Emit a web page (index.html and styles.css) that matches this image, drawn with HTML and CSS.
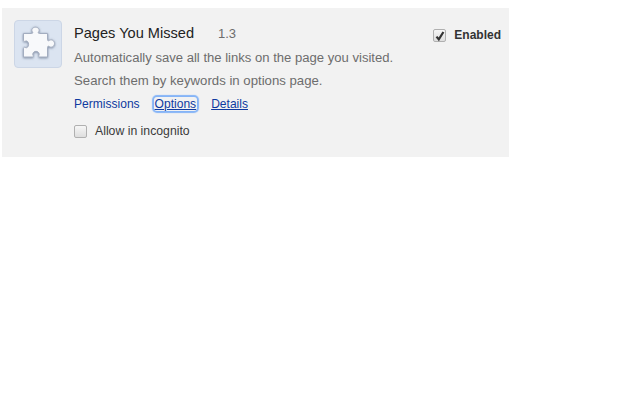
FILE: index.html
```html
<!DOCTYPE html>
<html lang="en">
<head>
<meta charset="utf-8">
<title>Extensions</title>
<link rel="stylesheet" href="styles.css">
</head>
<body>
<div class="card">
  <div class="icon">
    <svg width="48" height="48" viewBox="0 0 48 48">
      <defs>
        <filter id="s" x="-20%" y="-20%" width="140%" height="140%"><feDropShadow dx="0" dy="0.6" stdDeviation="0.8" flood-color="#5d6b85" flood-opacity="0.8"/></filter>
      </defs>
      <path class="piece" filter="url(#s)" d="M9.5 13.5 H17.5 C19 13.5 19 12.5 18.2 11.5 C17 9.5 18.8 7.2 21.5 7.2 C24.2 7.2 26 9.5 24.8 11.5 C24 12.5 24 13.5 25.5 13.5 H33.5 V19.5 C33.5 21 34.5 21 35.5 20.3 C37.5 19 40.5 20.6 40.5 23.5 C40.5 26.4 37.5 28 35.5 26.7 C34.5 26 33.5 26 33.5 27.5 V37 H25.5 C24.5 37 24.5 36 25 35.2 C25.8 33.4 24.2 31.3 22 31.3 C19.8 31.3 18.2 33.4 19 35.2 C19.5 36 19.5 37 18.5 37 H9.5 V28.5 C9.5 27.3 10.5 27 11.3 27.5 C13.1 28.4 14.6 26.6 14.6 24.3 C14.6 22 13.1 20.3 11.3 21.2 C10.5 21.7 9.5 21.4 9.5 20.2 Z"/>
    </svg>
  </div>
  <div class="main">
    <div class="title"><span class="name">Pages You Missed</span><span class="version">1.3</span></div>
    <p class="desc">Automatically save all the links on the page you visited.</p>
    <p class="desc desc-wide">Search them by keywords in options page.</p>
    <div class="links"><a href="#p">Permissions</a><a href="#o" class="focused">Options</a><a href="#d" class="under">Details</a></div>
    <div class="incognito"><span class="box"></span><span>Allow in incognito</span></div>
  </div>
  <div class="enable">
    <span class="box">
      <svg width="14" height="14" viewBox="0 0 14 14"><path class="tick" d="M3.5 7.6 L5.8 10.4 L10.4 3"/></svg>
    </span>
    <span class="enabled-label">Enabled</span>
  </div>
</div>
</body>
</html>
```
FILE: styles.css
```css
html, body { margin: 0; padding: 0; background: #fff; }
body { padding: 8px 0 0 2px; font-family: "Liberation Sans", Arial, sans-serif; font-size: 13px; color: #6d6d6d; }
.card { width: 507px; height: 149px; box-sizing: border-box; background: #f2f2f2; display: flex; padding: 12px 8px 0 12px; }
.icon { width: 48px; height: 48px; flex: none; background: #dbe4f1; border: 1px solid #ccd6e6; border-radius: 4px; box-sizing: border-box; margin-right: 12px; display: flex; align-items: center; justify-content: center; }
.icon svg { flex: none; }
.piece { fill: #f8f9fb; stroke: #a3adc0; stroke-width: 1; }
.main { flex: 1; min-width: 0; }
.title { height: 26px; display: flex; align-items: baseline; }
.name { font-size: 14.6px; color: #222; width: 144px; line-height: 26px; }
.version { font-size: 13px; color: #6d6d6d; }
.desc { margin: 0; height: 23px; line-height: 23px; font-size: 13.08px; }
.desc-wide { font-size: 13.2px; }
.links { display: flex; align-items: center; height: 24px; font-size: 12.05px; }
.links a { color: #0f3aa0; text-decoration: none; margin-right: 14px; }
.links a.focused { text-decoration: underline; padding: 0 1px; border-radius: 3px; box-shadow: 0 0 1px 2px #85b4f7; }
.links a.under { text-decoration: underline; }
.incognito { display: flex; align-items: center; gap: 8px; margin-top: 8px; font-size: 12.25px; color: #3a3a3a; }
.box { width: 13px; height: 13px; box-sizing: border-box; flex: none; border: 1px solid #b0b0b0; border-radius: 2px; background: linear-gradient(#f6f6f6, #dedede); position: relative; display: block; }
.box svg { position: absolute; left: -1px; top: -1px; }
.tick { fill: none; stroke: #333; stroke-width: 2.2; }
.enable { display: flex; align-items: center; gap: 8px; height: 20px; margin-top: 5px; flex: none; }
.enabled-label { font-size: 12px; font-weight: bold; color: #333; }
```
